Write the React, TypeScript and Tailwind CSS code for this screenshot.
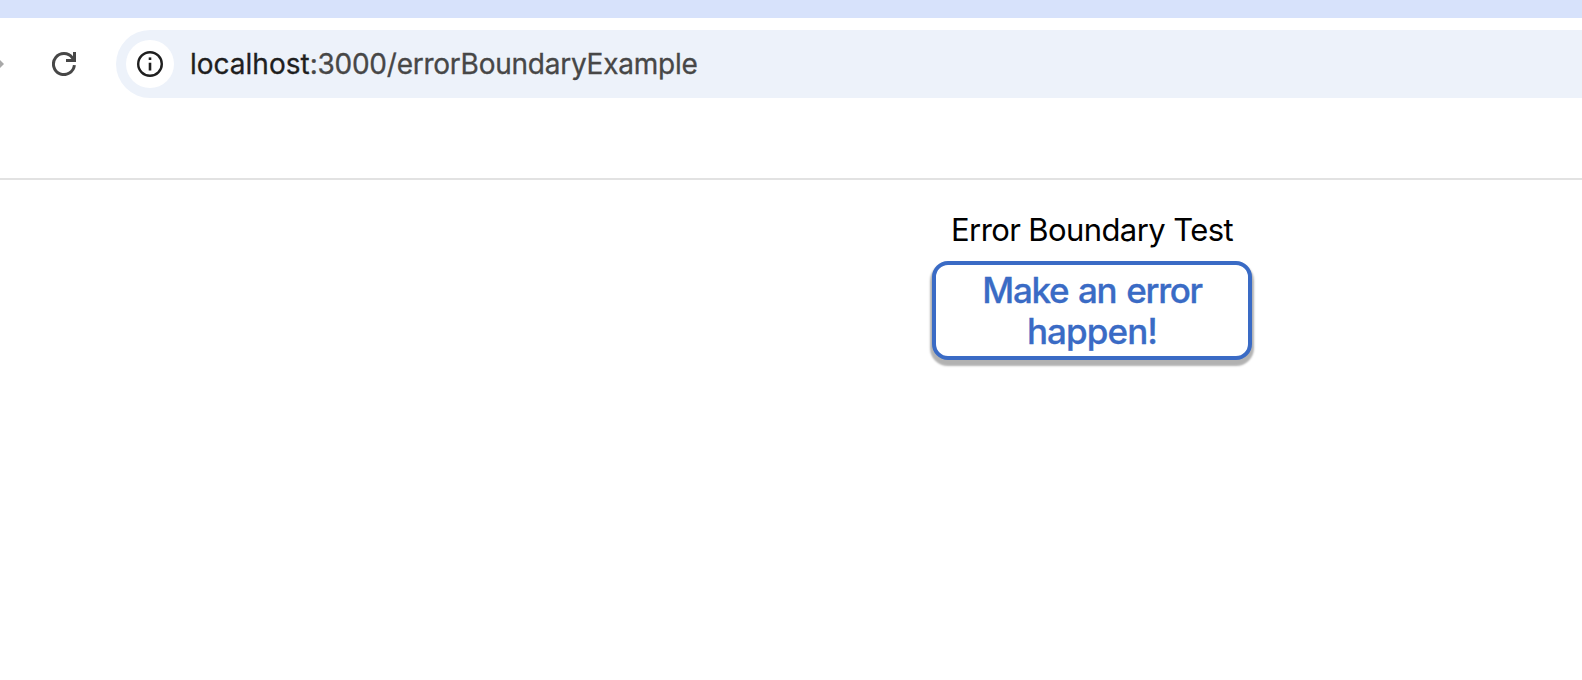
function ReloadIcon() {
  return (
    <svg className="ml-[52px] h-6 w-6 shrink-0" viewBox="0 0 24 24" fill="none" stroke="#474747" strokeWidth="3">
      <path d="M22.4 13.2A10.5 10.5 0 1 1 20.4 5.8L23 8.6" />
      <path d="M22.5 0V8.5H14" />
    </svg>
  );
}

function InfoIcon() {
  return (
    <svg className="h-[26px] w-[26px]" viewBox="0 0 26 26" fill="none">
      <circle cx="13" cy="13" r="11.8" stroke="#1f1f1f" strokeWidth="2.4" />
      <path d="M13 11.7V19.5" stroke="#1f1f1f" strokeWidth="2.6" />
      <path d="M13 6.4V9" stroke="#1f1f1f" strokeWidth="2.6" />
    </svg>
  );
}

export default function App() {
  return (
    <div className="flex h-[680px] w-full flex-col overflow-hidden bg-white font-['Inter',sans-serif]">
      <div className="h-[18px] shrink-0 bg-[#d7e2fb]" />
      <header className="h-[162px] shrink-0 border-b-2 border-[#e2e2e2] pt-3">
        <div className="flex h-[68px] items-center">
          <svg className="h-2 w-1 shrink-0" viewBox="0 0 4 8">
            <path d="M0 0L4 4L0 8Z" fill="#a8a8a8" />
          </svg>
          <div className="-ml-1 flex">
            <ReloadIcon />
          </div>
          <div className="ml-10 flex h-[68px] flex-1 items-center rounded-l-full bg-[#edf2fa] pl-2.5">
            <div className="flex h-12 w-12 items-center justify-center rounded-full bg-white">
              <InfoIcon />
            </div>
            <div className="ml-4 whitespace-nowrap text-[28px] leading-none tracking-[-0.24px] text-[#474747] [-webkit-text-stroke:0.3px_currentColor]">
              <span className="tracking-[0px] text-[#1f1f1f]">localhost</span>:3000/errorBoundaryExample
            </div>
          </div>
        </div>
      </header>
      <main className="ml-[932px] flex w-80 flex-col items-center pt-[31px]">
        <p className="whitespace-nowrap text-[31px] leading-[38px] tracking-[-0.6px] text-black">Error Boundary Test</p>
        <button className="mt-3 h-[99px] w-80 rounded-2xl border-4 border-[#3a6bc5] bg-white px-4 text-center text-[35px] font-medium leading-[41px] text-[#3a6bc5] [-webkit-text-stroke:0.3px_currentColor] shadow-[0_4px_2px_2px_rgba(0,0,0,0.3)]">
          <span className="block whitespace-nowrap tracking-[-1.35px] [word-spacing:2px]">Make an error</span>
          <span className="block whitespace-nowrap tracking-[-0.9px]">happen!</span>
        </button>
      </main>
    </div>
  );
}
